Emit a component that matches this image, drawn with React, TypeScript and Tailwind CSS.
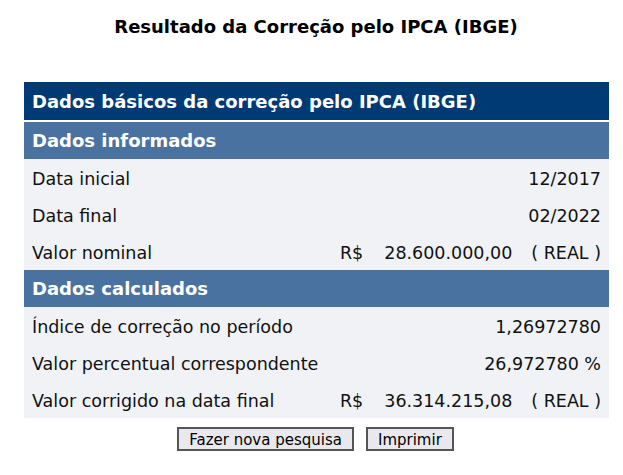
const FONT = "font-['Verdana','DejaVu_Sans',sans-serif]";

function Header({ children, dark }: { children: string; dark?: boolean }) {
  return (
    <div
      className={`flex items-center px-2 text-white font-bold text-[18px] ${
        dark ? "h-[38px] bg-[#003a75]" : "h-[37px] bg-[#4a72a0]"
      }`}
    >
      {children}
    </div>
  );
}

function Row({ label, value, money }: { label: string; value: string; money?: boolean }) {
  return (
    <div className="h-[37px] flex items-center justify-between px-2 pt-[3px] bg-[#f0f2f5] text-[17.5px] text-[#111]">
      <span>{label}</span>
      {money ? (
        <span className="flex items-center">
          <span>R$</span>
          <span className="ml-[21px]">{value}</span>
          <span className="ml-[19px]">( REAL )</span>
        </span>
      ) : (
        <span>{value}</span>
      )}
    </div>
  );
}

export default function App() {
  return (
    <div className={`w-[623px] h-[475px] bg-white ${FONT}`}>
      <h1 className="pt-[13px] text-center font-bold text-[18px] text-black pl-[9px]">
        Resultado da Correção pelo IPCA (IBGE)
      </h1>
      <div className="ml-[24px] mr-[14px] mt-[42px]">
        <Header dark>Dados básicos da correção pelo IPCA (IBGE)</Header>
        <div className="h-[2px] bg-white" />
        <Header>Dados informados</Header>
        <Row label="Data inicial" value="12/2017" />
        <Row label="Data final" value="02/2022" />
        <Row label="Valor nominal" value="28.600.000,00" money />
        <Header>Dados calculados</Header>
        <Row label="Índice de correção no período" value="1,26972780" />
        <Row label="Valor percentual correspondente" value="26,972780 %" />
        <Row label="Valor corrigido na data final" value="36.314.215,08" money />
      </div>
      <div className="flex justify-center gap-3 mt-[9px] pl-[8px]">
        <button className="h-[24px] px-[10px] bg-[#e9e9ed] border-2 border-[#555] text-[15px] text-black">
          Fazer nova pesquisa
        </button>
        <button className="h-[24px] px-[10px] bg-[#e9e9ed] border-2 border-[#555] text-[15px] text-black">
          Imprimir
        </button>
      </div>
    </div>
  );
}
